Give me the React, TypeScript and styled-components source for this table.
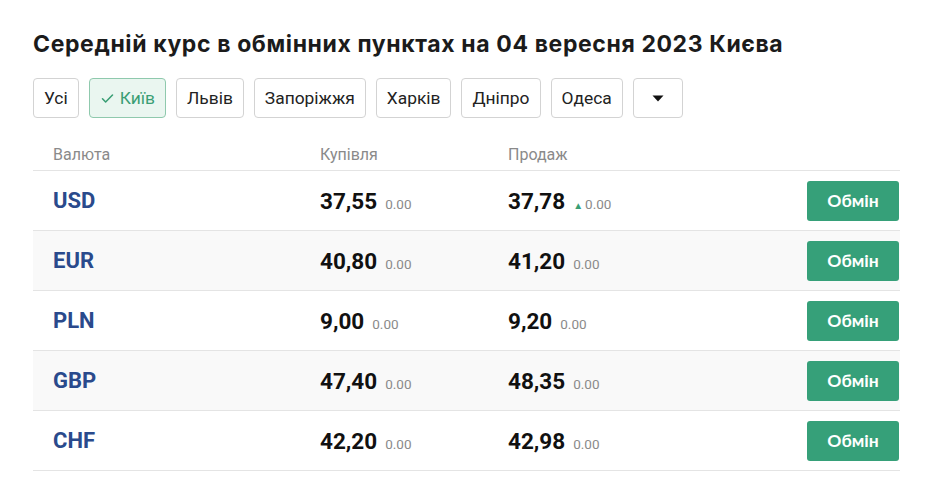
import React from "react";
import styled, { createGlobalStyle } from "styled-components";

const Global = createGlobalStyle`
  html, body { margin: 0; padding: 0; background: #fff; }
  body { font-family: Roboto, "Liberation Sans", sans-serif; }
`;

const Page = styled.div`
  padding: 28px 27px 0 33px;
  width: 867px;
`;

const Title = styled.h1`
  margin: 0;
  font-family: Inter, "Noto Sans", sans-serif;
  font-weight: 700;
  font-size: 23px;
  line-height: 32px;
  color: #1b1b1b;
  letter-spacing: 0.62px;
  white-space: nowrap;
`;

const Chips = styled.div`
  display: flex;
  gap: 10px;
  margin-top: 18px;
`;

const Chip = styled.button<{ $active?: boolean }>`
  height: 40px;
  padding: 0 10px;
  border: 1px solid ${(p) => (p.$active ? "#8fc9ad" : "#d3d3d3")};
  background: ${(p) => (p.$active ? "#eaf6f0" : "#fff")};
  color: ${(p) => (p.$active ? "#3a9e74" : "#222")};
  border-radius: 4px;
  font-family: Roboto, "Liberation Sans", sans-serif;
  font-size: 17.4px;
  display: flex;
  align-items: center;
  gap: 5px;
  cursor: pointer;
`;

const DropChip = styled(Chip)`
  width: 50px;
  justify-content: center;
`;

const Table = styled.div`
  margin-top: 21px;
  display: flex;
  flex-direction: column;
`;

const Row = styled.div<{ $alt?: boolean; $head?: boolean }>`
  display: grid;
  grid-template-columns: 267px 188px 1fr auto;
  align-items: center;
  height: ${(p) => (p.$head ? "31px" : "59px")};
  padding: 0 1px 0 20px;
  border-bottom: 1px solid #e4e4e4;
  background: ${(p) => (p.$alt ? "#f9f9f9" : "#fff")};
`;

const HeadCell = styled.div`
  font-size: 16px;
  color: #8a8a8a;
  padding-bottom: 1px;
`;

const Code = styled.div`
  font-size: 22px;
  font-weight: 700;
  color: #2a4a8c;
`;

const Rate = styled.div`
  display: flex;
  align-items: baseline;
  gap: 8px;
`;

const Value = styled.span`
  font-size: 22.5px;
  font-weight: 700;
  color: #111;
`;

const Delta = styled.span`
  font-size: 13.5px;
  color: #8a8a8a;
  display: inline-flex;
  align-items: baseline;
  gap: 2px;
`;

const Up = styled.span`
  color: #3a9e74;
  font-size: 10px;
`;

const ExchangeButton = styled.button`
  width: 92px;
  height: 40px;
  border: none;
  border-radius: 3px;
  background: #36a079;
  color: #fff;
  font-family: Lato, "Open Sans", sans-serif;
  font-weight: 700;
  font-size: 17.5px;
  cursor: pointer;
`;

const rows = [
  { code: "USD", buy: "37,55", sell: "37,78", up: true },
  { code: "EUR", buy: "40,80", sell: "41,20" },
  { code: "PLN", buy: "9,00", sell: "9,20" },
  { code: "GBP", buy: "47,40", sell: "48,35" },
  { code: "CHF", buy: "42,20", sell: "42,98" },
];

const cities = ["Львів", "Запоріжжя", "Харків", "Дніпро", "Одеса"];

export default function App() {
  return (
    <>
      <Global />
      <Page>
        <Title>Середній курс в обмінних пунктах на 04 вересня 2023 Києва</Title>
        <Chips>
          <Chip>Усі</Chip>
          <Chip $active>
            <svg width="15" height="15" viewBox="0 0 24 24" fill="none" stroke="#3a9e74" strokeWidth="2.5" strokeLinecap="round" strokeLinejoin="round">
              <path d="M4 12.5l5 5L20 6.5" />
            </svg>
            Київ
          </Chip>
          {cities.map((c) => (
            <Chip key={c}>{c}</Chip>
          ))}
          <DropChip>
            <svg width="12" height="7" viewBox="0 0 12 7">
              <path d="M0.5 0.5h11L6 6.5z" fill="#111" />
            </svg>
          </DropChip>
        </Chips>
        <Table>
          <Row $head>
            <HeadCell>Валюта</HeadCell>
            <HeadCell>Купівля</HeadCell>
            <HeadCell>Продаж</HeadCell>
            <div />
          </Row>
          {rows.map((r, i) => (
            <Row key={r.code} $alt={i % 2 === 1}>
              <Code>{r.code}</Code>
              <Rate>
                <Value>{r.buy}</Value>
                <Delta>0.00</Delta>
              </Rate>
              <Rate>
                <Value>{r.sell}</Value>
                <Delta>
                  {r.up && <Up>▲</Up>}
                  0.00
                </Delta>
              </Rate>
              <ExchangeButton>Обмін</ExchangeButton>
            </Row>
          ))}
        </Table>
      </Page>
    </>
  );
}
